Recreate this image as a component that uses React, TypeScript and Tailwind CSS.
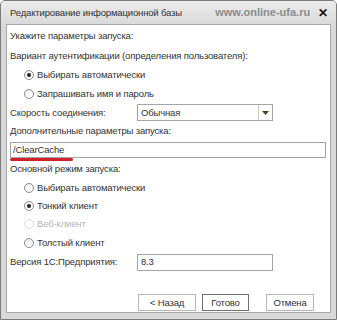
import React from "react";

const font = { fontFamily: '"Liberation Sans", Arial, sans-serif' };

function Radio({ checked, disabled, label }: { checked?: boolean; disabled?: boolean; label: string }) {
  return (
    <div className="flex items-center h-full pl-[14px]">
      <span
        className={`w-[10px] h-[10px] rounded-full border flex items-center justify-center mr-[3px] ${
          disabled ? "border-[#dcdcdc] bg-white" : "border-[#8a8a8a] bg-gradient-to-b from-[#f2f2f2] to-white"
        }`}
      >
        {checked && <span className="w-[4px] h-[4px] rounded-full bg-[#222]" />}
      </span>
      <span className={disabled ? "text-[#b4b4b4]" : "text-[#333]"}>{label}</span>
    </div>
  );
}

export default function App() {
  return (
    <div
      className="w-[337px] h-[320px] bg-[#cfcfcf] flex flex-col border border-[#7a7a7a] rounded-t-[5px] overflow-hidden text-[9.5px] tracking-[-0.15px] leading-none whitespace-nowrap"
      style={font}
    >
      <div className="h-[23px] flex items-center bg-gradient-to-b from-[#ececec] to-[#dadada] pl-[9px] pr-[8px]">
        <span className="text-[#333] text-[9.5px]">Редактирование информационной базы</span>
        <span className="ml-auto text-[#8c8c8c] font-bold text-[11px] tracking-normal">www.online-ufa.ru</span>
        <span className="ml-[8px] text-[#111] font-bold text-[12px]">✕</span>
      </div>
      <div className="flex-1 flex flex-col bg-[#d9d9d9] px-[5px] pb-[6px]">
        <div className="flex-1 flex flex-col bg-white border border-[#a9a9a9] pt-[1px] pl-[3px] pr-[4px] relative">
          <div className="h-[20px] flex items-center text-[#333]">Укажите параметры запуска:</div>
          <div className="h-[19px] flex items-center text-[#333]">Вариант аутентификации (определения пользователя):</div>
          <div className="h-[19px]"><Radio checked label="Выбирать автоматически" /></div>
          <div className="h-[19px]"><Radio label="Запрашивать имя и пароль" /></div>
          <div className="h-[19px] flex items-center text-[#333]">
            <span className="w-[127px]">Скорость соединения:</span>
            <div className="w-[136px] h-[17px] border border-[#a5a5a5] flex items-center">
              <span className="flex-1 pl-[3px]">Обычная</span>
              <span className="w-[14px] h-full border-l border-[#c8c8c8] flex items-center justify-center">
                <svg width="7" height="4" viewBox="0 0 7 4"><path d="M0 0h7L3.5 4z" fill="#3d4a1e" /></svg>
              </span>
            </div>
          </div>
          <div className="h-[18px] flex items-center text-[#333]">Дополнительные параметры запуска:</div>
          <div className="h-[19px] flex items-center relative">
            <div className="w-[318px] h-[16px] border border-[#a5a5a5] flex items-center pl-[2px] text-[#333]">/ClearCache</div>
            <div className="absolute left-[0px] bottom-[-2px] w-[63px] h-[3px] rounded-full bg-[#d0202a]" />
          </div>
          <div className="h-[19px] flex items-center text-[#333]">Основной режим запуска:</div>
          <div className="h-[19px]"><Radio label="Выбирать автоматически" /></div>
          <div className="h-[18px]"><Radio checked label="Тонкий клиент" /></div>
          <div className="h-[18px]"><Radio disabled label="Веб-клиент" /></div>
          <div className="h-[19px]"><Radio label="Толстый клиент" /></div>
          <div className="h-[20px] flex items-center text-[#333]">
            <span className="w-[127px]">Версия 1С:Предприятия:</span>
            <div className="w-[136px] h-[17px] border border-[#a5a5a5] flex items-center pl-[3px]">8.3</div>
          </div>
          <div className="mt-[11px] mx-[1px] h-[1px] bg-[#bdbdbd] border-b border-white" />
          <div className="flex mt-[10px] pl-[128px]">
            <div className="w-[58px] h-[17px] border border-[#b5b5b5] flex items-center justify-center text-[#333]">&lt; Назад</div>
            <div className="w-[47px] h-[17px] ml-[6px] border border-[#707070] flex items-center justify-center text-[#333]">Готово</div>
            <div className="w-[48px] h-[17px] ml-[17px] border border-[#b5b5b5] flex items-center justify-center text-[#333]">Отмена</div>
          </div>
        </div>
      </div>
    </div>
  );
}
